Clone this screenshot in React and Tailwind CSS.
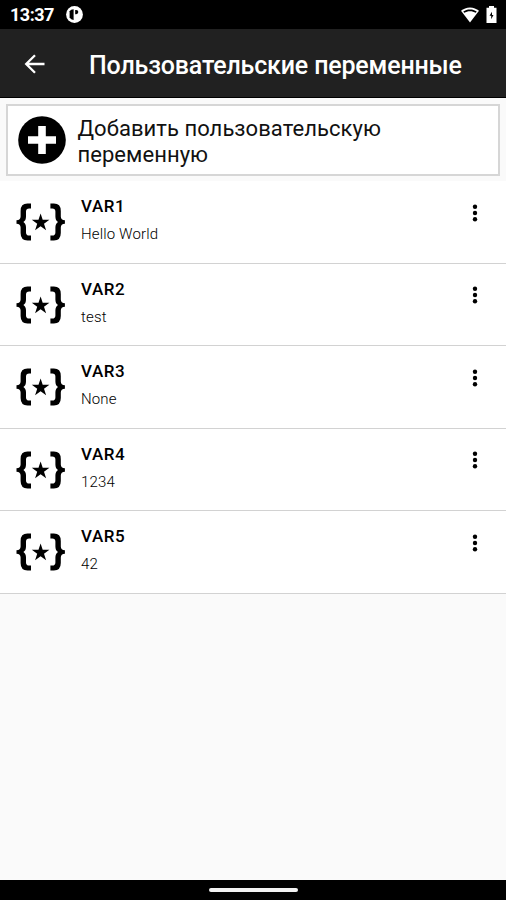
const variables = [
  { name: 'VAR1', value: 'Hello World' },
  { name: 'VAR2', value: 'test' },
  { name: 'VAR3', value: 'None' },
  { name: 'VAR4', value: '1234' },
  { name: 'VAR5', value: '42' },
]

function StatusBar() {
  return (
    <div className="h-[29px] shrink-0 bg-black text-white flex items-center pl-[10px] pr-[9px]">
      <span className="w-[56px] text-[18px] leading-[29px] font-bold tracking-[-0.5px]">13:37</span>
      <svg width="17" height="17" viewBox="0 0 17 17" className="shrink-0">
        <circle cx="8.5" cy="8.5" r="8.4" fill="#fff" />
        <path d="M3.600 5.200Q4.600 3.200 7.600 3.200v10.800Q4.900 13.600 3.600 11.500z" fill="#000" />
        <path d="M9.200 4h1a2.100 2.100 0 0 1 0 4.200h-1z" fill="#000" />
      </svg>
      <div className="ml-auto flex items-center gap-[7px]">
        <svg width="18" height="16" viewBox="0 0 18 16">
          <path d="M9 .4C5.600.4 2.400 1.700 0 3.800L9 15.400 18 3.800C15.600 1.700 12.400.4 9 .4z" fill="#fff" />
          <path d="M2.300 4.500C4.200 3 6.400 2.400 9 2.400s4.800.6 6.700 2.100l-.9 1.200C13 4.800 11.100 4.200 9 4.200S5 4.800 3.200 5.700z" fill="#000" />
        </svg>
        <svg width="11" height="17" viewBox="0 0 11 17">
          <path d="M3 0h5v1.800h2.500V17H.5V1.800H3z" fill="#fff" />
          <path d="M6 5.800 3.500 9.800h1.700v3.400L7.500 9H6z" fill="#000" />
        </svg>
      </div>
    </div>
  )
}

function Header() {
  return (
    <header className="h-[69px] shrink-0 bg-[#212121] border-b border-black text-white flex items-center pl-6">
      <svg width="21" height="20" viewBox="0 0 21 20" fill="none" stroke="#fff" strokeWidth="2.3" className="mt-[2px]">
        <path d="M20.500 10H2.500M11 1.200 2.200 10l8.800 8.800" />
      </svg>
      <h1 className="ml-11 mt-[5px] text-[25px] leading-8 font-medium tracking-[-0.17px] whitespace-nowrap">Пользовательские переменные</h1>
    </header>
  )
}

function AddButton() {
  return (
    <button className="mx-[6px] mt-[6px] mb-[5px] h-[72px] shrink-0 border-2 border-[#d6d6d6] bg-white flex items-center pl-[9px] text-left">
      <svg width="50" height="50" viewBox="0 0 50 50" className="shrink-0">
        <circle cx="25" cy="25" r="23.800" fill="#000" />
        <path d="M21.200 11h7.600v10.200H39v7.600H28.800V39h-7.600V28.800H11v-7.600h10.200z" fill="#fff" />
      </svg>
      <span className="ml-[10.500px] mt-[3px] w-[340px] text-[22px] leading-[26px] tracking-[0.05px] text-[#111]">
        Добавить пользовательскую переменную
      </span>
    </button>
  )
}

const BRACE = 'M15 .6H11.500Q4.600.6 4.600 8v5.500Q4.600 17 .5 17.200v3.600Q4.600 21 4.600 24.500V30Q4.600 37.400 11.500 37.400H15V32.600h-1.800Q10 32.600 10 29.500V24.500Q10 20.500 7.400 19 10 17.500 10 13.500V8.500Q10 5.400 13.200 5.400H15z'

// Curly braces with a star in the middle
function VariableIcon() {
  return (
    <svg width="50" height="38" viewBox="0 0 50 38" className="shrink-0">
      <path d={BRACE} />
      <path d={BRACE} transform="translate(49.4 0) scale(-1 1)" />
      <path d="m24.600 10.500 2.100 6.300h6.700L28 20.700l2.100 6.500-5.500-4-5.500 4 2.100-6.500-5.400-3.900h6.700z" />
    </svg>
  )
}

function VariableRow({ name, value }) {
  return (
    <li className="h-[82.5px] bg-white border-b border-[#d2d2d2] flex items-start pl-4 pr-[28px]">
      <div className="pt-[22px]">
        <VariableIcon />
      </div>
      <div className="ml-[15px] pt-[15.400px]">
        <p className="text-[17px] leading-5 font-medium tracking-[0.6px]">{name}</p>
        <p className="mt-[9.100px] text-[15px] leading-[18px] font-light tracking-[0.15px]">{value}</p>
      </div>
      <button className="ml-auto mt-[22.500px]">
        <svg width="6" height="18" viewBox="0 0 6 18" className="block">
          <circle cx="3" cy="2.800" r="2.200" />
          <circle cx="3" cy="9" r="2.200" />
          <circle cx="3" cy="15.200" r="2.200" />
        </svg>
      </button>
    </li>
  )
}

export default function App() {
  return (
    <div className="h-screen w-full flex flex-col overflow-hidden bg-[#fafafa] text-black font-[Roboto,sans-serif]">
      <StatusBar />
      <Header />
      <AddButton />
      <ul className="flex-1">
        {variables.map((item) => (
          <VariableRow key={item.name} name={item.name} value={item.value} />
        ))}
      </ul>
      <div className="h-[20px] shrink-0 bg-black flex items-center justify-center">
        <div className="w-[89px] h-[4px] rounded-full bg-[#f2f2f2]" />
      </div>
    </div>
  )
}
